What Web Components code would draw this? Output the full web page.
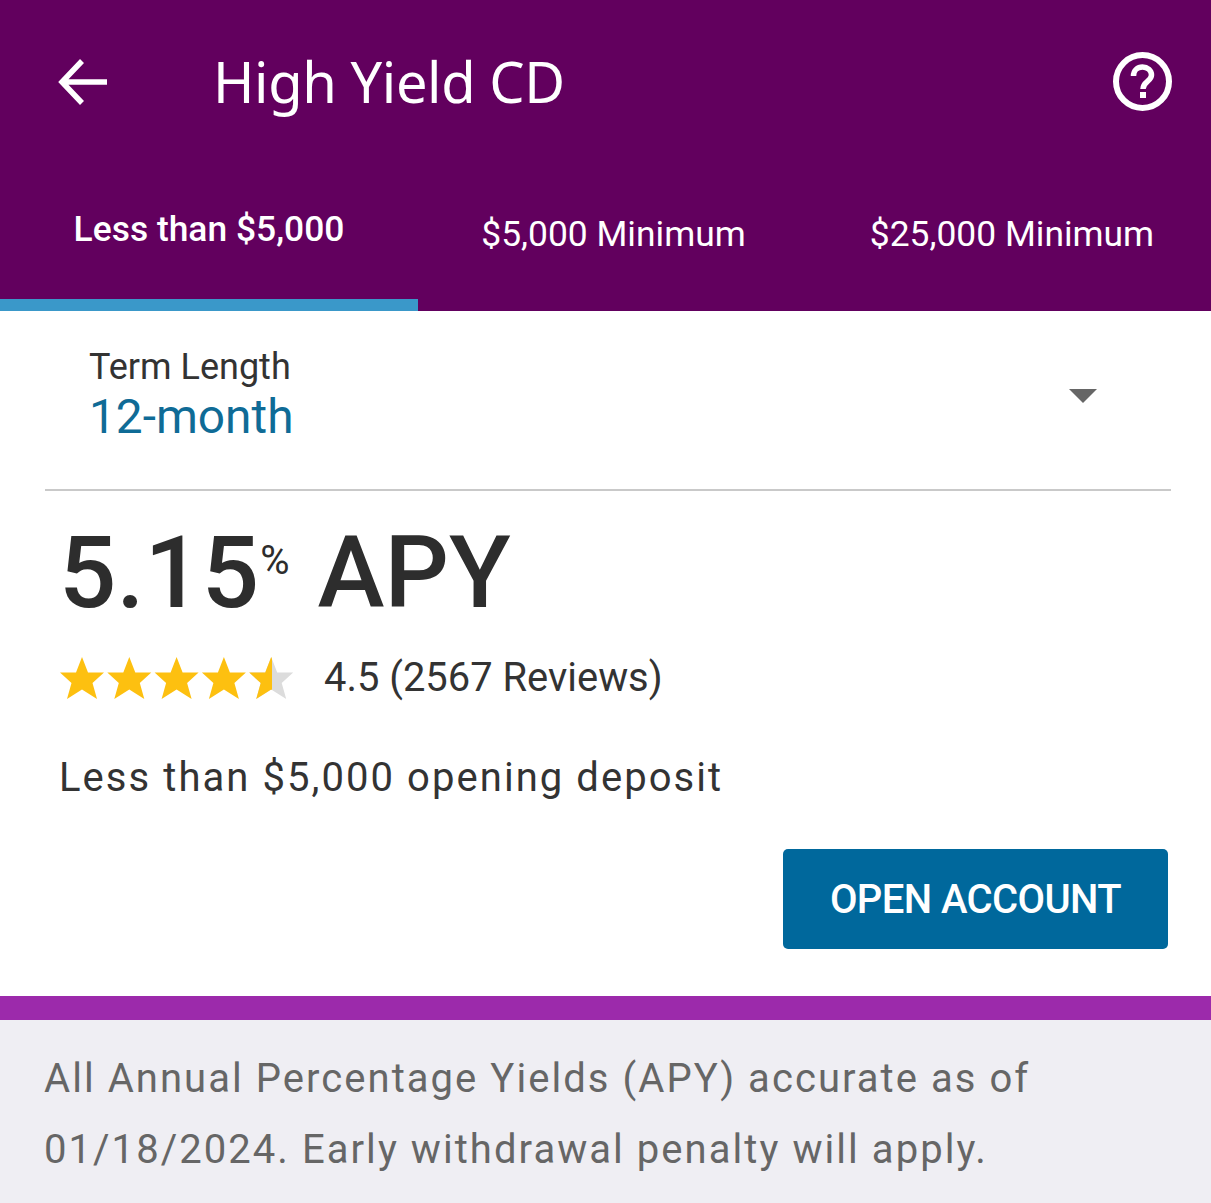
<!DOCTYPE html>
<html><head><meta charset="utf-8"><style>
html,body{margin:0;padding:0;background:#fff}
body{width:1211px;height:1203px;overflow:hidden;font-family:Roboto,sans-serif}
</style></head><body>
<cd-screen>
<app-bar title-text="High Yield CD"></app-bar>
<cd-tabs></cd-tabs>
<term-select></term-select>
<rate-card></rate-card>
<legal-note>All Annual Percentage Yields (APY) accurate as of<br>01/18/2024. Early withdrawal penalty will apply.</legal-note>
</cd-screen>
<template id="t-screen"><style>:host{display:flex;flex-direction:column;width:1211px;height:1203px}</style><slot></slot></template>
<template id="t-bar"><style>
:host{display:flex;align-items:center;height:164px;background:#62005e;color:#fff;box-sizing:border-box;padding:0 38px 0 58px}
.back{width:50px;height:50px;flex:none}
h1{margin:0 0 0 105px;flex:1;font:400 56px/1 "Noto Sans",sans-serif;letter-spacing:-.4px;white-space:nowrap;position:relative;top:-1px}
.help{width:62px;height:62px;flex:none}
</style>
<svg class="back" viewBox="0 0 50 50" fill="none" stroke="#fff" stroke-width="5.500"><path d="M49 25H5M24 4L4 25L24 46"/></svg>
<h1></h1>
<svg class="help" viewBox="0 0 62 62" fill="none" stroke="#fff"><circle cx="31.500" cy="30.500" r="26.500" stroke-width="6"/><path d="M22.500 25c0-5.500 4-9 9-9s9 3.500 9 8c0 6.500-8.500 6.500-8.500 14" stroke-width="5.500"/><path d="M32 41v6" stroke-width="6"/></svg>
</template>
<template id="t-tabs"><style>
:host{display:block;height:147px;background:#62005e;color:#fff;position:relative}
.row{display:flex;height:135px;font-family:Roboto,sans-serif;font-size:35.400px;white-space:nowrap}
.tab{display:flex;justify-content:center;box-sizing:border-box;line-height:40px}
.tab:nth-child(1){width:418px;font-weight:500;padding-top:45px}
.tab:nth-child(2){width:391px;padding-top:50px}
.tab:nth-child(3){width:402px;padding-top:50px;padding-left:4px}
.ink{width:418px;height:12px;background:#3a98c9}
</style><div class="row"><div class="tab">Less than $5,000</div><div class="tab">$5,000 Minimum</div><div class="tab">$25,000 Minimum</div></div><div class="ink"></div></template>
<template id="t-term"><style>
:host{display:block;margin:0 40px 0 45px;height:180px;box-sizing:border-box;border-bottom:2px solid #c9c9c9;position:relative;padding:36px 0 0 44px}
.l{font-size:36px;line-height:40px;color:#333;font-family:Roboto,sans-serif}
.v{font-size:47.800px;line-height:50px;color:#0f6b96;font-family:Roboto,sans-serif;margin-top:5px}
.c{position:absolute;right:74px;top:78px;width:0;height:0;border-left:14px solid transparent;border-right:14px solid transparent;border-top:14px solid #666}
</style><div class="l">Term Length</div><div class="v">12-month</div><div class="c"></div></template>
<template id="t-rate"><style>
:host{display:block;height:505px;box-sizing:border-box;padding:29px 44px 0 59px;color:#2d2d2d;font-family:Roboto,sans-serif}
.apy{font-size:101px;line-height:106px;font-weight:500;white-space:nowrap;display:flex;align-items:flex-start}
.apy sup{font-size:40px;line-height:40px;font-weight:400;margin:21px 29px 0 1px;letter-spacing:-1px}
.stars{display:flex;align-items:center;margin-top:28px;height:46px}
svg{width:236px;height:46px;flex:none}
.rev{font-size:39.900px;margin-left:29px;white-space:nowrap;color:#333}
.dep{font-size:40px;letter-spacing:2.060px;margin-top:55px;line-height:46px;color:#333;white-space:nowrap}
.act{display:flex;justify-content:flex-end;margin-top:48px;margin-right:-1px}
.btn{width:385px;height:100px;background:#00689c;color:#fff;border-radius:5px;display:flex;align-items:center;justify-content:center;font-size:40px;font-weight:500;letter-spacing:-.6px}
</style>
<div class="apy"><span>5.15</span><sup>%</sup><span>APY</span></div>
<div class="stars"><svg viewBox="0 0 236 46"><defs><path id="s" d="M22 0l6 15.500H44L32.500 26l4.500 16-15-9.500L7 42l4.500-16L0 15.500h16z"/><clipPath id="h"><rect x="189" y="0" width="23" height="46"/></clipPath></defs>
<g fill="#fdc010" transform="translate(1 3)"><use href="#s"/><use href="#s" x="47.300"/><use href="#s" x="94.600"/><use href="#s" x="141.900"/></g>
<g transform="translate(1 3)"><use href="#s" x="189.200" fill="#dcdcdc"/><g clip-path="url(#h)"><use href="#s" x="189.200" fill="#fdc010"/></g></g></svg><span class="rev">4.5 (2567 Reviews)</span></div>
<div class="dep">Less than $5,000 opening deposit</div>
<div class="act"><div class="btn">OPEN ACCOUNT</div></div></template>
<template id="t-legal"><style>
:host{display:block;flex:1;background:#efeef3;border-top:24px solid #9c2aab;box-sizing:border-box;padding:23px 40px 0 44px;font-family:Roboto,sans-serif;font-size:40px;line-height:71px;letter-spacing:2.050px;color:#666;white-space:nowrap}
</style><slot></slot></template>
<script>
function reg(name,id,init){customElements.define(name,class extends HTMLElement{constructor(){super();const r=this.attachShadow({mode:"open"});r.appendChild(document.getElementById(id).content.cloneNode(true));if(init)init(r,this)}})}
reg("cd-screen","t-screen");
reg("app-bar","t-bar",(r,h)=>{r.querySelector("h1").textContent=h.getAttribute("title-text")||"High Yield CD"});
reg("cd-tabs","t-tabs");reg("term-select","t-term");reg("rate-card","t-rate");reg("legal-note","t-legal");
</script>
</body></html>
